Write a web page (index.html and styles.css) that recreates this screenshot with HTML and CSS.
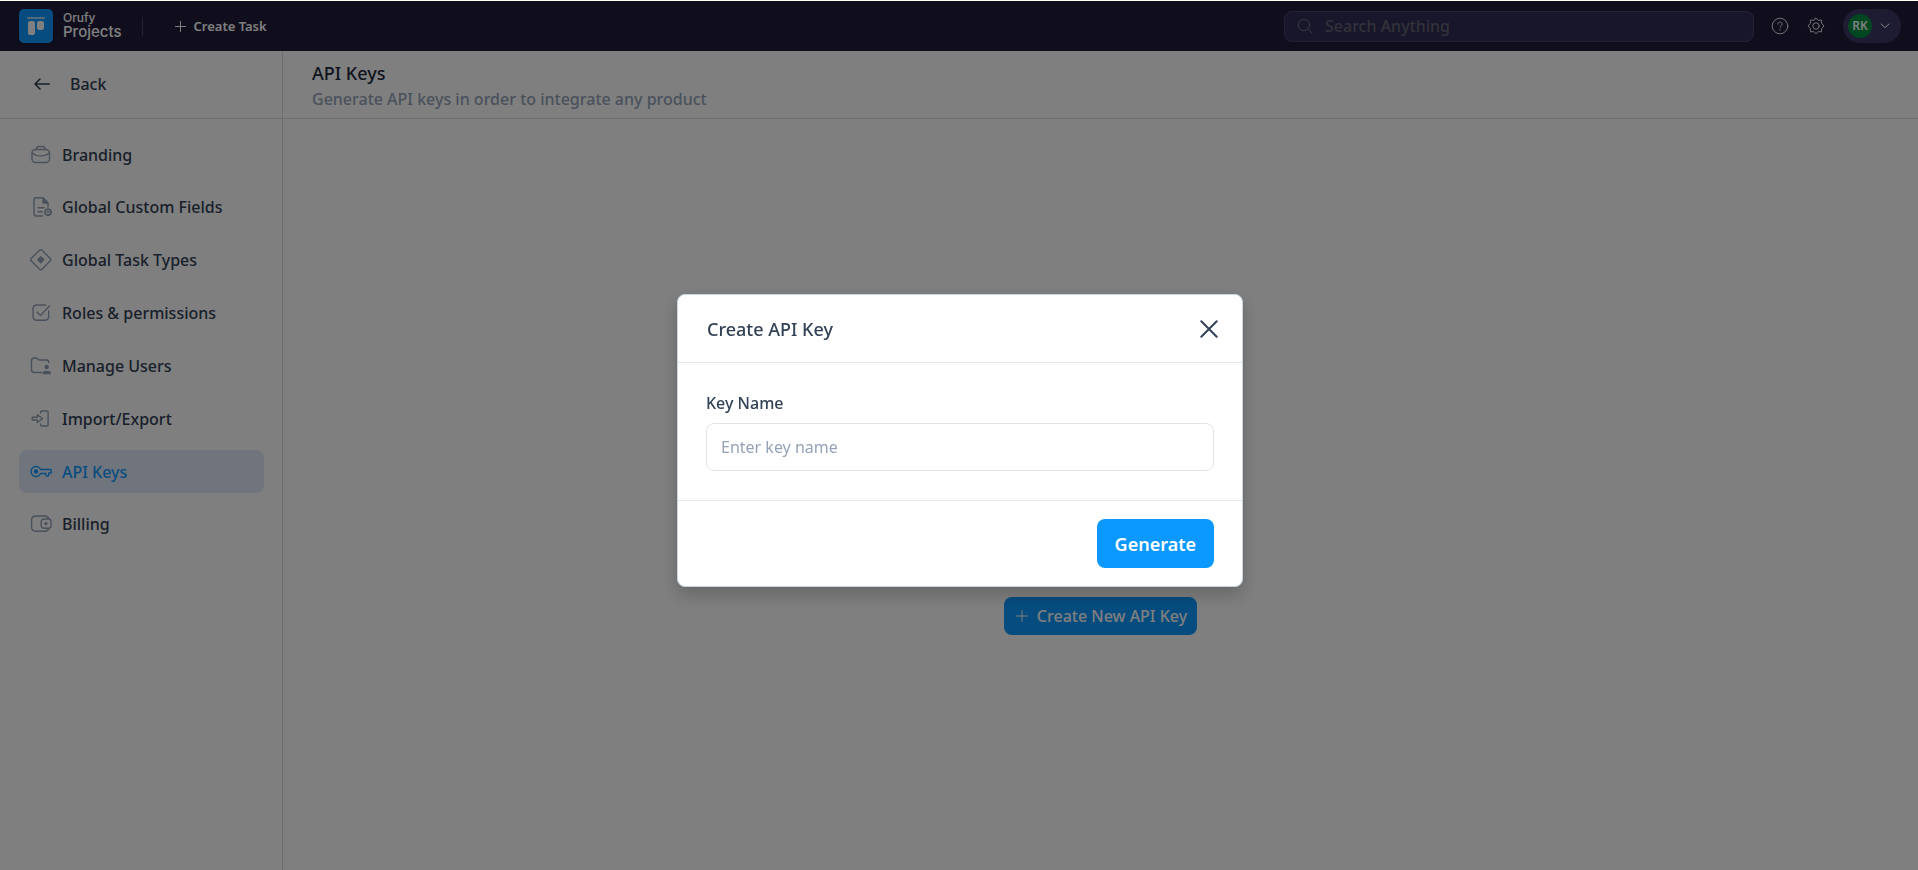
FILE: index.html
```html
<!DOCTYPE html>
<html lang="en">
<head>
<meta charset="utf-8">
<title>API Keys - Orufy Projects</title>
<link rel="stylesheet" href="styles.css">
</head>
<body>
<header class="topbar">
  <a class="brand" href="#">
    <svg class="brand-logo" viewBox="0 0 34 34" aria-hidden="true">
      <rect width="34" height="34" rx="5" fill="#0c99ff"/>
      <rect x="8" y="8" width="18" height="2" rx="1" fill="#9dd6ff"/>
      <rect x="9" y="12" width="7" height="14" rx="2" fill="#fff"/>
      <rect x="18" y="12" width="7" height="9" rx="2" fill="#fff"/>
    </svg>
    <span class="brand-text"><span class="brand-small">Orufy</span><span class="brand-large">Projects</span></span>
  </a>
  <span class="divider"></span>
  <button class="create-task" type="button">
    <svg width="11" height="11" viewBox="0 0 11 11" aria-hidden="true"><path d="M5.5 .5v10M.5 5.5h10"/></svg>
    Create Task
  </button>
  <label class="search">
    <svg width="16" height="16" viewBox="0 0 16 16" aria-hidden="true"><circle cx="7" cy="7" r="5.7"/><path d="m11.2 11.2 4 4"/></svg>
    <input type="search" placeholder="Search Anything" aria-label="Search Anything">
  </label>
  <button class="icon-button" type="button" aria-label="Help">
    <svg width="18" height="18" viewBox="0 0 18 18" aria-hidden="true"><circle cx="9" cy="9" r="7.8"/><path d="M6.9 7.2c0-1.300.9-2.200 2.100-2.200s2.200.8 2.200 2c0 1.700-2.100 1.700-2.100 3.400M9 12.400v.6"/></svg>
  </button>
  <button class="icon-button" type="button" aria-label="Settings">
    <svg width="18" height="18" viewBox="0 0 18 18" aria-hidden="true"><path d="m9 1.200 2.300 2.100 3.200-.2.200 3.300L17 9l-2.300 2.600-.2 3.200-3.200-.2L9 16.800l-2.300-2.200-3.200.2-.2-3.200L1 9l2.300-2.600.2-3.300 3.200.2z"/><circle cx="9" cy="9" r="3.200"/></svg>
  </button>
  <button class="account" type="button" aria-label="Account">
    <span class="avatar">RK</span>
    <svg width="10" height="6" viewBox="0 0 10 6" aria-hidden="true"><path d="m1 1 4 3.600L9 1"/></svg>
  </button>
</header>

<div class="layout">
  <aside class="sidebar">
    <a class="back" href="#">
      <svg width="16" height="12" viewBox="0 0 16 12" aria-hidden="true"><path d="M15.300 6H1M6 1 1 6l5 5"/></svg>
      Back
    </a>
    <nav class="menu">
      <a class="menu-item" href="#">
        <svg viewBox="0 0 22 22" aria-hidden="true"><rect x="2" y="5.500" width="17.500" height="13" rx="3.500"/><path d="M6.500 5.500c0-2 .8-3 2-3H13c1.200 0 2 1 2 3M2 9c4.500 3.800 13 3.800 17.500 0"/></svg>
        Branding
      </a>
      <a class="menu-item" href="#">
        <svg viewBox="0 0 22 22" aria-hidden="true"><path d="M12.500 20H6.200C4.600 20 4 19.400 4 17.800V4c0-1.600.6-2.300 2.200-2.300H13L18 7v4M8 11.700h6M8 15.700h4"/><path class="solid" d="M13 2v5h5z"/><circle cx="18" cy="16.200" r="3.300" stroke-dasharray="1.700 .9"/><circle cx="18" cy="16.200" r="2.700" stroke-width="1"/><circle cx="18" cy="16.200" r=".8" stroke-width="1"/></svg>
        Global Custom Fields
      </a>
      <a class="menu-item" href="#">
        <svg viewBox="0 0 22 22" aria-hidden="true"><path d="M9.600 1.300 1.100 9.600c-.8.800-.8 1.400 0 2.200l8.500 8.400c.8.800 1.600.8 2.400 0l8.300-8.400c.8-.8.800-1.400 0-2.200L12 1.300c-.8-.8-1.600-.8-2.400 0z"/><path class="solid" d="m10.800 7.800 3 3-3 3-3-3z"/></svg>
        Global Task Types
      </a>
      <a class="menu-item" href="#">
        <svg viewBox="0 0 22 22" aria-hidden="true"><path d="M15.500 3H7C4 3 3 4 3 7v7.200c0 3 1 4 4 4h7.700c3 0 4-1 4-4V9"/><path d="m7 10 3.500 3.600L19.300 4"/></svg>
        Roles &amp; permissions
      </a>
      <a class="menu-item" href="#">
        <svg viewBox="0 0 22 22" aria-hidden="true"><path d="M11.500 17.500H4.200c-1.900 0-2.700-.9-2.700-2.700V6c0-2 .8-3 2.700-3H6c1.800 0 1.800 2 3.800 2h6.500c1.800 0 2.500.8 2.500 2.500"/><circle class="solid" cx="16.700" cy="12" r="1.500"/><path class="solid" d="M13.200 18.600v-.7c0-1.800 7-1.800 7 0v.7z"/></svg>
        Manage Users
      </a>
      <a class="menu-item" href="#">
        <svg viewBox="0 0 22 22" aria-hidden="true"><path d="M10.500 5V4.300c0-.9.500-1.300 1.300-1.300h5c.9 0 1.300.4 1.300 1.300v12.400c0 .9-.4 1.300-1.300 1.300h-5c-.8 0-1.300-.4-1.300-1.300V16M2.300 9.200h5V6.700l5.200 3.900-5.200 3.900V12h-5z"/></svg>
        Import/Export
      </a>
      <a class="menu-item active" href="#" aria-current="page">
        <svg viewBox="0 0 22 22" aria-hidden="true"><path d="M10.600 8.500h9.500c.8 0 1.200.4 1.200 1.200v2.200h-2.500V14c0 .8-.3 1-1 1h-1c-.7 0-1-.3-1-1v-1.500h-5.200a5 5 0 1 1 0-4z"/><circle class="solid" cx="6" cy="10.500" r="1.500"/></svg>
        API Keys
      </a>
      <a class="menu-item" href="#">
        <svg viewBox="0 0 22 22" aria-hidden="true"><path d="M19 6c-.6-2-1.800-3-4.200-3H6C3 3 1.600 4.300 1.600 7.300v6.400c0 3 1.400 4.500 4.400 4.500h8.800c2.400 0 3.600-1 4.200-3M18.500 6h-4c-2.300 0-3.300 1-3.300 3v3.200c0 2 1 3 3.300 3h4c1.700 0 2.500-.7 2.500-2.500V8.500c0-1.700-.8-2.500-2.500-2.500z"/><circle class="solid" cx="16" cy="10.600" r="1"/></svg>
        Billing
      </a>
    </nav>
  </aside>
  <main class="content">
    <div class="page-head">
      <h1 class="page-title">API Keys</h1>
      <p class="page-note">Generate API keys in order to integrate any product</p>
    </div>
    <div class="empty">
      <div class="empty-body">
        <button class="new-key" type="button">
          <svg width="12" height="12" viewBox="0 0 12 12" aria-hidden="true"><path d="M6 .5v11M.5 6h11"/></svg>
          Create New API Key
        </button>
      </div>
    </div>
  </main>
</div>

<div class="overlay">
  <form class="modal" role="dialog" aria-modal="true" aria-labelledby="modal-title">
    <div class="modal-head">
      <h2 class="modal-title" id="modal-title">Create API Key</h2>
      <button class="close" type="button" aria-label="Close">
        <svg width="18" height="18" viewBox="0 0 18 18" aria-hidden="true"><path d="m1.300 1.300 15.400 15.400M16.700 1.300 1.300 16.700"/></svg>
      </button>
    </div>
    <div class="modal-body">
      <label class="field-label" for="key-name">Key Name</label>
      <input class="field" id="key-name" type="text" placeholder="Enter key name">
    </div>
    <div class="modal-foot">
      <button class="generate" type="button">Generate</button>
    </div>
  </form>
</div>
</body>
</html>
```

FILE: styles.css
```css
* { box-sizing: border-box; }

body {
  margin: 0;
  min-height: 100vh;
  display: flex;
  flex-direction: column;
  border-top: 1px solid #fffff0;
  background: #fff;
  color: #334155;
  font-family: "Noto Sans", "Open Sans", sans-serif;
  font-size: 16px;
  font-weight: 500;
  line-height: 20px;
}

h1, h2, p { margin: 0; }
a { color: inherit; text-decoration: none; }
button, input { font: inherit; color: inherit; }
button { border: 0; padding: 0; background: none; cursor: pointer; }
svg { flex: none; fill: none; stroke: currentColor; stroke-linecap: round; stroke-linejoin: round; }

.topbar {
  display: flex;
  align-items: center;
  height: 50px;
  padding: 0 17px 0 19px;
  background: #201d3a;
  color: #fff;
}

.brand { display: flex; align-items: center; gap: 10px; font-family: Inter, "Liberation Sans", sans-serif; }
.brand-logo { width: 34px; height: 34px; stroke: none; }
.brand-text { display: flex; flex-direction: column; padding-bottom: 2px; }
.brand-small { font-size: 12px; line-height: 12px; }
.brand-large { font-size: 15px; line-height: 15px; }

.divider { width: 1px; height: 19px; margin: 0 32px 0 20px; background: #45426a; }

.create-task { display: flex; align-items: center; gap: 8px; font-size: 13px; font-weight: 600; }

.search {
  display: flex;
  align-items: center;
  gap: 12px;
  width: 470px;
  height: 31px;
  margin: 0 17px 0 auto;
  padding: 0 12px;
  border: 1px solid #45426a;
  border-radius: 8px;
  background: #312d54;
  color: #6b7280;
}
.search input { flex: 1; min-width: 0; padding: 0; border: 0; outline: 0; background: none; }
.search input::placeholder { color: #656475; opacity: 1; }

.icon-button { display: flex; margin-right: 18px; color: #e5e5ea; }
.icon-button svg { stroke-width: 1; }

.account {
  display: flex;
  align-items: center;
  gap: 8px;
  height: 34px;
  padding: 0 11px 0 5px;
  border-radius: 17px;
  background: #3d3965;
}
.avatar {
  width: 24px;
  height: 24px;
  border-radius: 50%;
  background: #008c43;
  font-size: 12px;
  font-weight: 600;
  line-height: 24px;
  text-align: center;
}

.layout { flex: 1; display: grid; grid-template-columns: 283px minmax(0, 1fr); }

.sidebar { border-right: 1px solid #dcdcdc; }
.back {
  display: flex;
  align-items: center;
  gap: 20px;
  height: 68px;
  padding: 0 0 2px 34px;
  border-bottom: 1px solid #dcdcdc;
}
.back svg { stroke-width: 1.6; }

.menu {
  display: flex;
  flex-direction: column;
  justify-content: space-between;
  min-height: 413px;
  margin: 14px 18px 0 19px;
}
.menu-item {
  display: flex;
  align-items: center;
  gap: 10px;
  height: 43px;
  padding-left: 11px;
  border-radius: 8px;
  color: #334155;
}
.menu-item svg { width: 22px; height: 22px; color: #94a3b8; stroke-width: 1.4; }
.menu-item .solid { fill: currentColor; }
.menu-item.active, .menu-item.active svg { color: #0c99ff; }
.menu-item.active { background: #e1eafa; }

.content { display: flex; flex-direction: column; }
.page-head { height: 68px; padding: 9px 29px 0; border-bottom: 1px solid #dcdcdc; }
.page-title { color: #1e293b; font-size: 18px; font-weight: 500; line-height: 26px; }
.page-note { color: #94a3b8; line-height: 26px; }

.empty { flex: 1; display: flex; align-items: center; justify-content: center; }
.empty-body { display: flex; align-items: flex-end; min-height: 281px; }
.new-key {
  display: flex;
  align-items: center;
  gap: 9px;
  height: 38px;
  padding: 0 10px 0 12px;
  border-radius: 8px;
  background: #0c99ff;
  color: #fff;
}

.overlay {
  position: fixed;
  inset: 1px 0 0;
  display: flex;
  align-items: center;
  justify-content: center;
  padding: 10px 0 0 2px;
  background: rgba(0, 0, 0, .5);
}
.modal {
  width: 566px;
  border: 1px solid #cbd5e1;
  border-radius: 8px;
  background: #fff;
  box-shadow: 0 8px 18px rgba(0, 0, 0, .2);
}
.modal-head {
  display: flex;
  align-items: center;
  justify-content: space-between;
  height: 68px;
  padding: 0 24px 0 29px;
  border-bottom: 1px solid #e5e7eb;
}
.modal-title { font-size: 18px; font-weight: 500; }
.close { display: flex; }
.close svg { stroke-width: 2; }
.modal-body { padding: 29px 28px; border-bottom: 1px solid #e5e7eb; }
.field-label { display: block; margin-bottom: 9px; line-height: 22px; }
.field {
  display: block;
  width: 100%;
  height: 48px;
  padding: 0 14px;
  border: 1px solid #e2e4e8;
  border-radius: 8px;
  background: #fff;
  font-weight: 400;
}
.field::placeholder { color: #94a3b8; opacity: 1; }
.modal-foot { display: flex; justify-content: flex-end; padding: 18px 28px; }
.generate {
  height: 49px;
  padding: 0 18px;
  border-radius: 8px;
  background: #0c99ff;
  color: #fff;
  font-size: 18px;
  font-weight: 600;
}
```
